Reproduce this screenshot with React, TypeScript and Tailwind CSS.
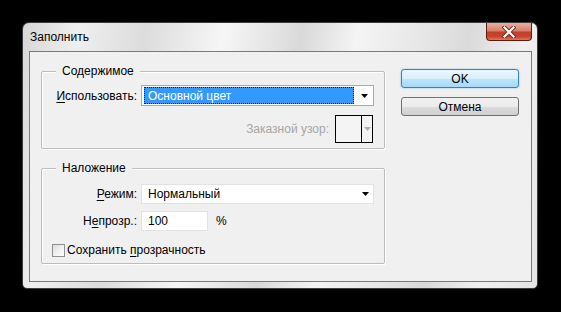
import React from "react";

function Arrow({ color = "#000" }: { color?: string }) {
  return (
    <svg width="7" height="4" viewBox="0 0 7 4">
      <polygon points="0,0 7,0 3.5,4" fill={color} />
    </svg>
  );
}

export default function App() {
  return (
    <div
      className="w-[561px] h-[312px] bg-black pt-[22px] pl-[22px] text-[12px] text-black"
      style={{ fontFamily: '"Liberation Sans", Arial, sans-serif' }}
    >
      <div className="relative w-[516px] h-[267px] rounded-t-[7px] rounded-b-[5px] border border-[#3c3c3c] bg-[linear-gradient(100deg,#d6d6d6_0%,#efefef_10%,#dcdcdc_22%,#f6f6f6_36%,#e2e2e2_46%,#d9d9d9_50%,#f4f4f4_60%,#e6e6e6_72%,#dadada_80%,#f0f0f0_90%,#e4e4e4_100%)] flex flex-col pl-[6px] pr-[5px] pb-[6px]">
        {/* title */}
        <div className="h-[28px] flex items-center pl-[1px] pb-[1px]">
          <span className="text-[12px] text-black">Заполнить</span>
        </div>
        {/* close button */}
        <div className="absolute top-0 right-[5px] w-[46px] h-[18px] rounded-b-[4px] border border-t-0 border-[#5b1d12] bg-[linear-gradient(180deg,#eab0a2_0%,#d9806b_45%,#c2402a_55%,#c8462e_80%,#e07a5e_100%)] flex items-center justify-center">
          <svg width="14" height="12" viewBox="0 0 14 12">
            <path d="M2.5 1.5 L11.5 10.5 M11.5 1.5 L2.5 10.5" stroke="#6b2a1c" strokeWidth="4" strokeLinecap="square" />
            <path d="M2.5 1.5 L11.5 10.5 M11.5 1.5 L2.5 10.5" stroke="#ffffff" strokeWidth="2.2" strokeLinecap="square" />
          </svg>
        </div>
        {/* client area */}
        <div className="flex-1 border border-[#7a7a7a] bg-[#f0f0f0] flex pl-[11px] pt-[17px]">
          {/* left column */}
          <div className="w-[344px] mt-[2px] flex flex-col">
            {/* group 1 */}
            <div className="relative h-[78px] rounded-[2px] border border-[#bcbcbc] shadow-[inset_1px_1px_0_#ffffff,1px_1px_0_#ffffff] pt-[13px]">
              <div className="absolute -top-[8px] left-[14px] px-[6px] bg-[#f0f0f0] leading-[14px]">
                Содержимое
              </div>
              <div className="flex items-center">
                <div className="w-[95px] text-right">
                  <span className="underline underline-offset-[2px]">И</span>спользовать:
                </div>
                <div className="ml-[4px] w-[233px] h-[21px] border border-[#a9a9a9] bg-white flex items-center pl-[2px]">
                  <div className="w-[210px] h-[17px] bg-[#3399ff] border border-dotted border-[#222] text-white flex items-center pl-[3px]">
                    Основной цвет
                  </div>
                  <div className="flex-1 flex items-center justify-center pl-[1px]">
                    <Arrow />
                  </div>
                </div>
              </div>
              <div className="flex items-center justify-end pr-[11px] mt-[9px]">
                <span className="text-[#a6a6a6] mr-[6px]">Заказной узор:</span>
                <div className="w-[38px] h-[28px] border border-black bg-[#f4f4f4] flex">
                  <div className="w-[26px] border-r border-black" />
                  <div className="flex-1 flex items-center justify-center">
                    <Arrow color="#b0b0b0" />
                  </div>
                </div>
              </div>
            </div>
            {/* group 2 */}
            <div className="relative mt-[19px] h-[96px] rounded-[2px] border border-[#bcbcbc] shadow-[inset_1px_1px_0_#ffffff,1px_1px_0_#ffffff] pt-[15px]">
              <div className="absolute -top-[8px] left-[14px] px-[6px] bg-[#f0f0f0] leading-[14px]">
                Наложение
              </div>
              <div className="flex items-center">
                <div className="w-[95px] text-right">
                  <span className="underline underline-offset-[2px]">Р</span>ежим:
                </div>
                <div className="ml-[4px] w-[233px] h-[20px] border border-[#e2e2e2] bg-white flex items-center pl-[6px]">
                  <span className="flex-1">Нормальный</span>
                  <div className="w-[16px] flex items-center justify-center">
                    <Arrow />
                  </div>
                </div>
              </div>
              <div className="flex items-center mt-[7px]">
                <div className="w-[95px] text-right">
                  Н<span className="underline underline-offset-[2px]">е</span>прозр.:
                </div>
                <div className="ml-[4px] w-[67px] h-[20px] border border-[#e2e2e2] bg-white flex items-center pl-[6px]">
                  100
                </div>
                <span className="ml-[8px]">%</span>
              </div>
              <div className="flex items-center mt-[10px] pl-[10px]">
                <div className="w-[13px] h-[13px] border border-[#8e8f8f] bg-[linear-gradient(135deg,#dcdcdc_0%,#f4f4f4_60%,#ffffff_100%)]" />
                <span className="ml-[2px]">
                  Сохранить <span className="underline underline-offset-[2px]">п</span>розрачность
                </span>
              </div>
            </div>
          </div>
          {/* buttons */}
          <div className="ml-[16px] w-[118px] flex flex-col gap-[9px]">
            <div className="h-[19px] rounded-[3px] border border-[#3c7fb1] bg-[linear-gradient(180deg,#eaf6fd_0%,#d9f0fc_50%,#bee6fd_51%,#a7d9f5_100%)] shadow-[0_0_2px_#7fc3ec] flex items-center justify-center">
              OK
            </div>
            <div className="h-[19px] rounded-[3px] border border-[#707070] bg-[linear-gradient(180deg,#f2f2f2_0%,#ebebeb_50%,#dddddd_51%,#cfcfcf_100%)] flex items-center justify-center">
              Отмена
            </div>
          </div>
        </div>
      </div>
    </div>
  );
}
